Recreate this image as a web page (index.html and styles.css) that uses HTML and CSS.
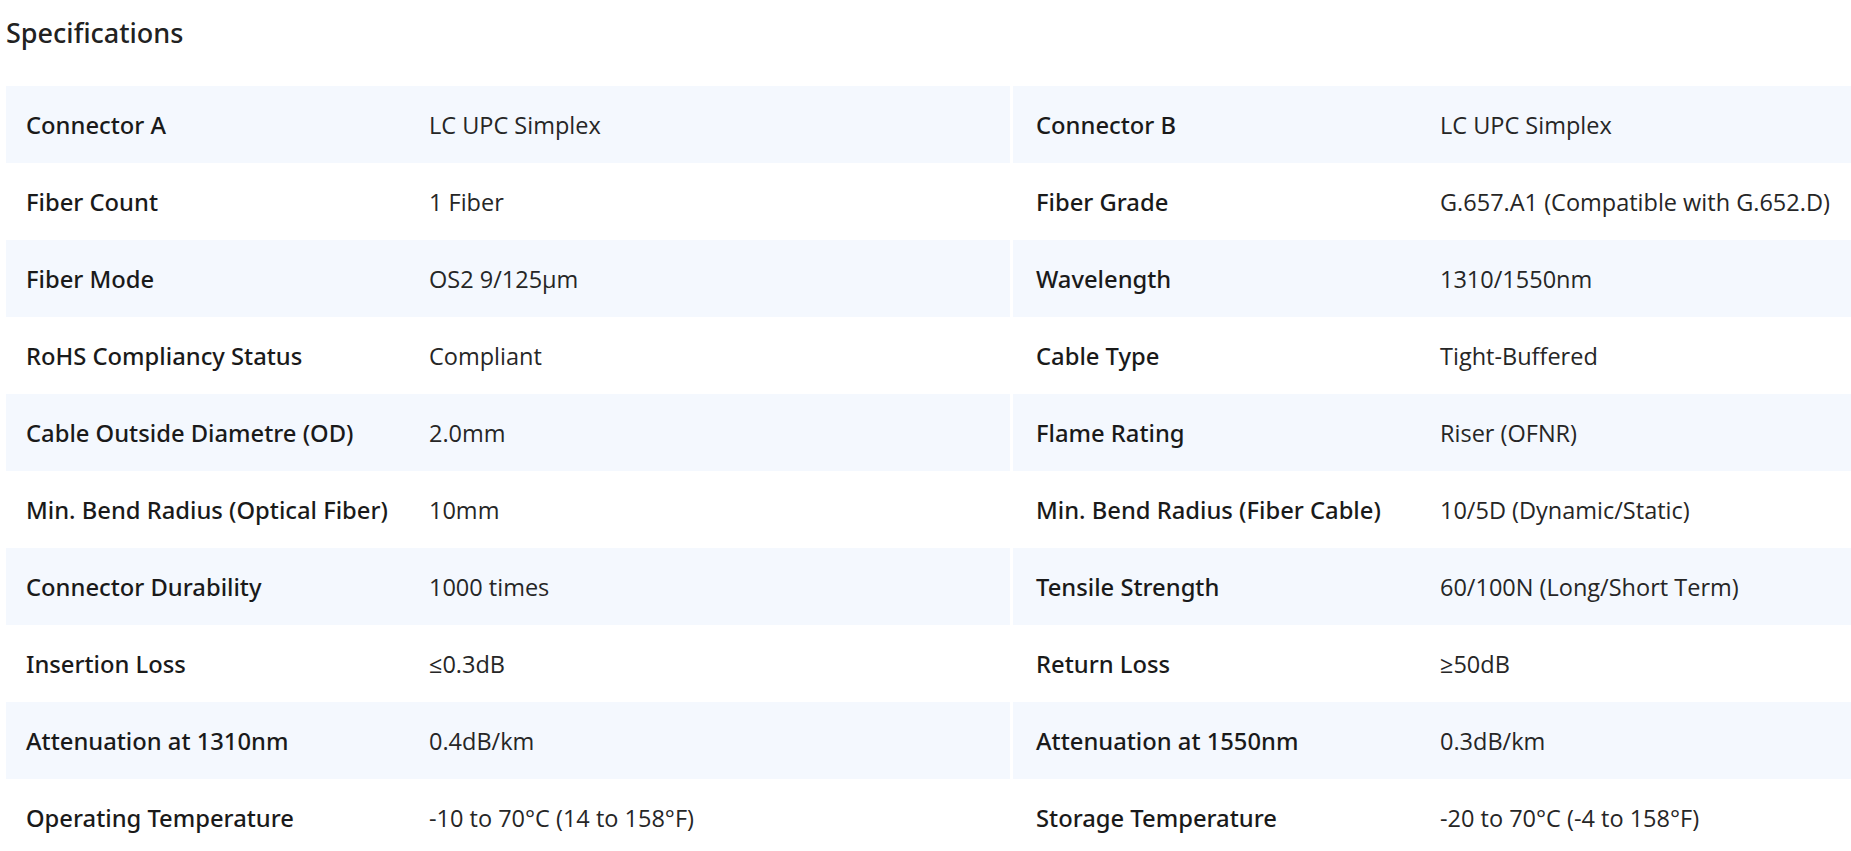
FILE: index.html
```html
<!DOCTYPE html>
<html lang="en">
<head>
<meta charset="utf-8">
<title>Specifications</title>
<link rel="stylesheet" href="styles.css">
</head>
<body>
<section class="specs">
  <h2 class="specs-title">Specifications</h2>
  <div class="specs-table">
    <div class="spec-row shaded">
      <div class="cell label">Connector A</div><div class="cell value">LC UPC Simplex</div>
      <div class="cell label right">Connector B</div><div class="cell value">LC UPC Simplex</div>
    </div>
    <div class="spec-row">
      <div class="cell label">Fiber Count</div><div class="cell value">1 Fiber</div>
      <div class="cell label right">Fiber Grade</div><div class="cell value">G.657.A1 (Compatible with G.652.D)</div>
    </div>
    <div class="spec-row shaded">
      <div class="cell label">Fiber Mode</div><div class="cell value">OS2 9/125μm</div>
      <div class="cell label right">Wavelength</div><div class="cell value">1310/1550nm</div>
    </div>
    <div class="spec-row">
      <div class="cell label">RoHS Compliancy Status</div><div class="cell value">Compliant</div>
      <div class="cell label right">Cable Type</div><div class="cell value">Tight-Buffered</div>
    </div>
    <div class="spec-row shaded">
      <div class="cell label">Cable Outside Diametre (OD)</div><div class="cell value">2.0mm</div>
      <div class="cell label right">Flame Rating</div><div class="cell value">Riser (OFNR)</div>
    </div>
    <div class="spec-row">
      <div class="cell label">Min. Bend Radius (Optical Fiber)</div><div class="cell value">10mm</div>
      <div class="cell label right">Min. Bend Radius (Fiber Cable)</div><div class="cell value">10/5D (Dynamic/Static)</div>
    </div>
    <div class="spec-row shaded">
      <div class="cell label">Connector Durability</div><div class="cell value">1000 times</div>
      <div class="cell label right">Tensile Strength</div><div class="cell value">60/100N (Long/Short Term)</div>
    </div>
    <div class="spec-row">
      <div class="cell label">Insertion Loss</div><div class="cell value">≤0.3dB</div>
      <div class="cell label right">Return Loss</div><div class="cell value">≥50dB</div>
    </div>
    <div class="spec-row shaded">
      <div class="cell label">Attenuation at 1310nm</div><div class="cell value">0.4dB/km</div>
      <div class="cell label right">Attenuation at 1550nm</div><div class="cell value">0.3dB/km</div>
    </div>
    <div class="spec-row">
      <div class="cell label">Operating Temperature</div><div class="cell value">-10 to 70°C (14 to 158°F)</div>
      <div class="cell label right">Storage Temperature</div><div class="cell value">-20 to 70°C (-4 to 158°F)</div>
    </div>
  </div>
</section>
</body>
</html>
```

FILE: styles.css
```css
html, body {
  margin: 0;
  padding: 0;
  background: #ffffff;
  overflow: hidden;
}

body {
  font-family: "Open Sans", "Noto Sans", sans-serif;
  color: #1f1f1f;
}

.specs {
  padding: 15px 0 0 6px;
  width: 2040px;
}

.specs-title {
  margin: 0 0 36px 0;
  font-family: "Noto Sans", "Open Sans", sans-serif;
  font-size: 27px;
  font-weight: 500;
  line-height: 35px;
  color: #222222;
}

.specs-table {
  display: flex;
  flex-direction: column;
}

.spec-row {
  display: grid;
  grid-template-columns: 403px 601px 410px 608px;
  height: 77px;
}

.cell {
  display: flex;
  align-items: center;
  font-size: 23.5px;
  white-space: nowrap;
  min-width: 0;
}

.shaded .cell {
  background: #f4f8fe;
}

.label {
  font-family: "Noto Sans", "Open Sans", sans-serif;
  font-weight: 500;
  font-size: 23.75px;
  padding-left: 20px;
  color: #1a1a1a;
}

.label.right {
  margin-left: 3px;
  padding-left: 23px;
}

.value {
  font-weight: 400;
  padding-left: 20px;
  color: #262626;
}
```
